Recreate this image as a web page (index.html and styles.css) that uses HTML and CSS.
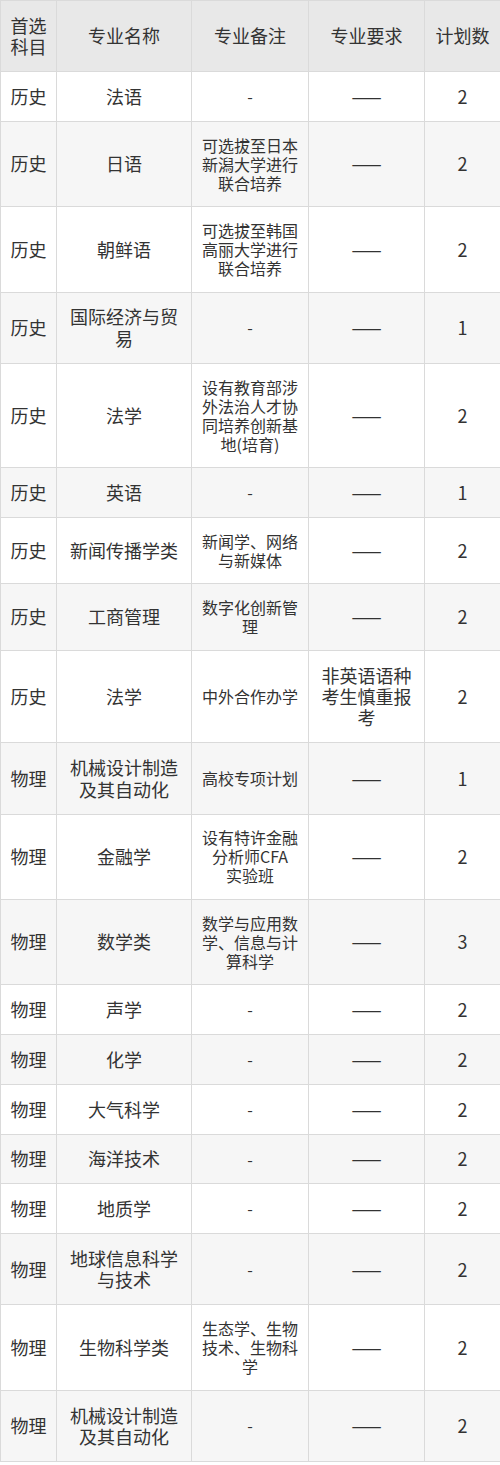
FILE: index.html
```html
<!DOCTYPE html>
<html lang="zh">
<head>
<meta charset="utf-8">
<link rel="stylesheet" href="styles.css">
</head>
<body>
<table class="plan">
<colgroup>
<col class="c1"><col class="c2"><col class="c3"><col class="c4"><col class="c5">
</colgroup>
<thead>
<tr><th class="first">首选科目</th><th>专业名称</th><th>专业备注</th><th>专业要求</th><th>计划数</th></tr>
</thead>
<tbody>
<tr><td class="first">历史</td><td>法语</td><td class="note">-</td><td><span class="dash">——</span></td><td>2</td></tr>
<tr><td class="first">历史</td><td>日语</td><td class="note">可选拔至日本新潟大学进行联合培养</td><td><span class="dash">——</span></td><td>2</td></tr>
<tr><td class="first">历史</td><td>朝鲜语</td><td class="note">可选拔至韩国高丽大学进行联合培养</td><td><span class="dash">——</span></td><td>2</td></tr>
<tr><td class="first">历史</td><td>国际经济与贸易</td><td class="note">-</td><td><span class="dash">——</span></td><td>1</td></tr>
<tr><td class="first">历史</td><td>法学</td><td class="note">设有教育部涉外法治人才协同培养创新基地(培育)</td><td><span class="dash">——</span></td><td>2</td></tr>
<tr><td class="first">历史</td><td>英语</td><td class="note">-</td><td><span class="dash">——</span></td><td>1</td></tr>
<tr><td class="first">历史</td><td>新闻传播学类</td><td class="note">新闻学、网络与新媒体</td><td><span class="dash">——</span></td><td>2</td></tr>
<tr><td class="first">历史</td><td>工商管理</td><td class="note">数字化创新管理</td><td><span class="dash">——</span></td><td>2</td></tr>
<tr><td class="first">历史</td><td>法学</td><td class="note">中外合作办学</td><td>非英语语种考生慎重报考</td><td>2</td></tr>
<tr><td class="first">物理</td><td>机械设计制造及其自动化</td><td class="note">高校专项计划</td><td><span class="dash">——</span></td><td>1</td></tr>
<tr><td class="first">物理</td><td>金融学</td><td class="note preline">设有特许金融分析师CFA
实验班</td><td><span class="dash">——</span></td><td>2</td></tr>
<tr><td class="first">物理</td><td>数学类</td><td class="note">数学与应用数学、信息与计算科学</td><td><span class="dash">——</span></td><td>3</td></tr>
<tr><td class="first">物理</td><td>声学</td><td class="note">-</td><td><span class="dash">——</span></td><td>2</td></tr>
<tr><td class="first">物理</td><td>化学</td><td class="note">-</td><td><span class="dash">——</span></td><td>2</td></tr>
<tr><td class="first">物理</td><td>大气科学</td><td class="note">-</td><td><span class="dash">——</span></td><td>2</td></tr>
<tr><td class="first">物理</td><td>海洋技术</td><td class="note">-</td><td><span class="dash">——</span></td><td>2</td></tr>
<tr><td class="first">物理</td><td>地质学</td><td class="note">-</td><td><span class="dash">——</span></td><td>2</td></tr>
<tr><td class="first">物理</td><td>地球信息科学与技术</td><td class="note">-</td><td><span class="dash">——</span></td><td>2</td></tr>
<tr><td class="first">物理</td><td>生物科学类</td><td class="note">生态学、生物技术、生物科学</td><td><span class="dash">——</span></td><td>2</td></tr>
<tr><td class="first">物理</td><td>机械设计制造及其自动化</td><td class="note">-</td><td><span class="dash">——</span></td><td>2</td></tr>
</tbody>
</table>
</body>
</html>
```
FILE: styles.css
```css
html, body {
  margin: 0;
  padding: 0;
  background: #ffffff;
}
body {
  font-family: "Noto Sans CJK SC", "Noto Sans", sans-serif;
  color: #333333;
}
.plan {
  width: 500px;
  table-layout: fixed;
  border-collapse: collapse;
}
.c1 { width: 56px; }
.c2 { width: 135px; }
.c3 { width: 117px; }
.c4 { width: 116px; }
.c5 { width: 76px; }
.plan th,
.plan td {
  border: 1px solid #dadada;
  padding: 13.7px 8px;
  font-size: 18px;
  line-height: 21.4px;
  font-weight: normal;
  text-align: center;
  vertical-align: middle;
}
.plan th {
  background: #e8e8e8;
}
.plan .first {
  padding-left: 6px;
  padding-right: 6px;
}
.plan .note {
  font-size: 16px;
  line-height: 19px;
}
.plan .preline {
  white-space: pre-line;
}
.dash {
  letter-spacing: 2px;
  padding-left: 2px;
}
.plan tbody tr:nth-child(even) td {
  background: #f6f6f6;
}
```
